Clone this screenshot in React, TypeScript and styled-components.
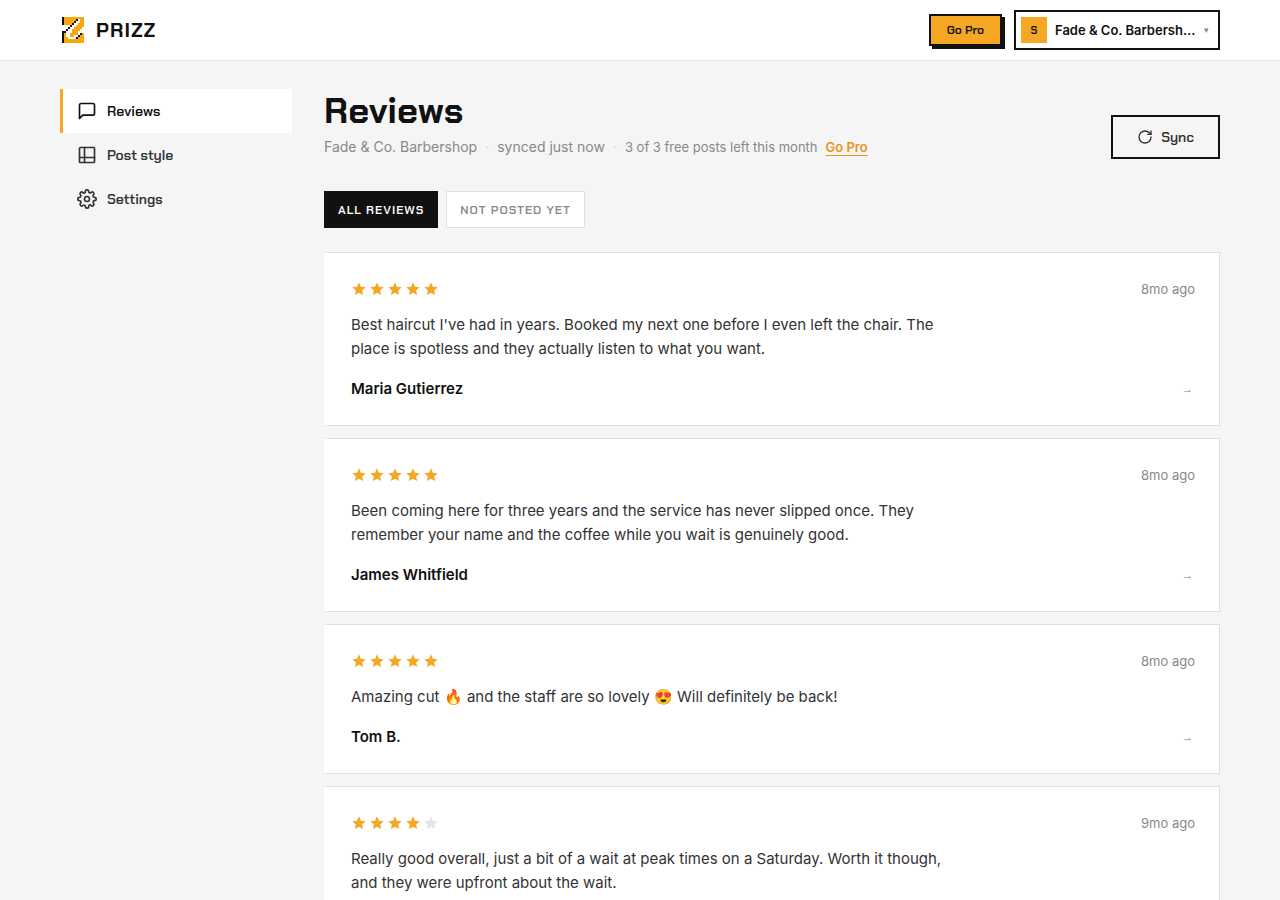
import React, { useState } from "react";
import styled, { createGlobalStyle } from "styled-components";

const INK = "#111111";
const AMBER = "#f5a623";
const DISPLAY = `"Chakra Petch", Inter, "Liberation Sans", sans-serif`;

const GlobalStyle = createGlobalStyle`
  *, *::before, *::after { box-sizing: border-box; }
  body {
    margin: 0;
    background: #f5f5f5;
    color: ${INK};
    font-family: Inter, "Liberation Sans", sans-serif;
    font-size: 15px;
    line-height: 24px;
  }
  button { font: inherit; color: inherit; cursor: pointer; }
`;

const TopBar = styled.header`
  background: #ffffff;
  border-bottom: 1px solid #e5e5e5;
`;

const TopBarInner = styled.div`
  display: flex;
  align-items: center;
  justify-content: space-between;
  max-width: 1240px;
  height: 60px;
  margin: 0 auto;
  padding: 0 40px;
`;

const Brand = styled.a`
  display: flex;
  align-items: center;
  gap: 12px;
  padding-left: 2px;
  color: ${INK};
  font-family: ${DISPLAY};
  font-size: 20px;
  font-weight: 700;
  letter-spacing: 1px;
  text-decoration: none;
`;

const TopActions = styled.div`
  display: flex;
  align-items: center;
  gap: 12px;
`;

const UpgradeButton = styled.button`
  height: 32px;
  padding: 0 16px;
  border: 2px solid ${INK};
  background: ${AMBER};
  box-shadow: 3px 3px 0 ${INK};
  && {
    font-family: ${DISPLAY};
    font-size: 12px;
    font-weight: 600;
    line-height: 16px;
  }
`;

const AccountButton = styled.button`
  display: flex;
  align-items: center;
  gap: 8px;
  width: 206px;
  height: 40px;
  padding: 0 9px 0 5px;
  border: 2px solid ${INK};
  background: #ffffff;
`;

const Avatar = styled.span`
  display: grid;
  place-items: center;
  flex: none;
  width: 26px;
  height: 26px;
  background: ${AMBER};
  font-family: ${DISPLAY};
  font-size: 11px;
  font-weight: 600;
`;

const AccountName = styled.span`
  flex: 1;
  min-width: 0;
  overflow: hidden;
  text-align: left;
  text-overflow: ellipsis;
  white-space: nowrap;
  font-size: 13px;
  font-weight: 600;
`;

const Caret = styled.span`
  color: #888888;
  font-size: 9px;
`;

const Shell = styled.div`
  display: grid;
  grid-template-columns: 232px minmax(0, 1fr);
  gap: 32px;
  max-width: 1240px;
  margin: 0 auto;
  padding: 28px 40px;
`;

const SideNav = styled.nav`
  display: flex;
  flex-direction: column;
`;

const NavLink = styled.a<{ $active?: boolean }>`
  display: flex;
  align-items: center;
  gap: 10px;
  height: 44px;
  padding: 0 14px;
  border-left: 3px solid ${(p) => (p.$active ? AMBER : "transparent")};
  background: ${(p) => (p.$active ? "#ffffff" : "transparent")};
  color: ${(p) => (p.$active ? INK : "#333333")};
  font-family: ${DISPLAY};
  font-size: 14px;
  font-weight: 600;
  text-decoration: none;
`;

const PageHead = styled.div`
  display: flex;
  align-items: flex-end;
  justify-content: space-between;
  margin-bottom: 32px;
`;

const Title = styled.h1`
  margin: 0 0 2px;
  font-family: ${DISPLAY};
  font-size: 36px;
  font-weight: 700;
  line-height: 44px;
`;

const Meta = styled.div`
  display: flex;
  align-items: center;
  gap: 8px;
  color: #888888;
  font-size: 14px;
`;

const Dot = styled.span`
  color: #d8d8d8;
`;

const Quota = styled.span`
  font-size: 13px;
`;

const UpgradeLink = styled.a`
  border-bottom: 1px solid #e8951a;
  color: #e8951a;
  font-size: 13px;
  font-weight: 600;
  line-height: 16px;
  text-decoration: none;
`;

const SyncButton = styled.button`
  display: flex;
  align-items: center;
  gap: 8px;
  height: 44px;
  padding: 0 24px;
  border: 2px solid ${INK};
  background: transparent;
  && {
    color: #333333;
    font-family: ${DISPLAY};
    font-size: 14px;
    font-weight: 600;
  }
`;

const Filters = styled.div`
  display: flex;
  gap: 8px;
  margin-bottom: 24px;
`;

const FilterButton = styled.button<{ $active: boolean }>`
  height: 37px;
  padding: 0 13px;
  border: 1px solid ${(p) => (p.$active ? INK : "#e0e0e0")};
  background: ${(p) => (p.$active ? INK : "#ffffff")};
  && {
    color: ${(p) => (p.$active ? "#ffffff" : "#888888")};
    font-family: ${DISPLAY};
    font-size: 12px;
    font-weight: 600;
    letter-spacing: 1px;
    text-transform: uppercase;
  }
`;

const ReviewList = styled.div`
  display: flex;
  flex-direction: column;
  gap: 12px;
`;

const Card = styled.article`
  padding: 24px;
  border: 1px solid #e0e0e0;
  border-left: 3px solid transparent;
  background: #ffffff;
`;

const CardRow = styled.div`
  display: flex;
  align-items: center;
  justify-content: space-between;
`;

const Stars = styled.div`
  display: flex;
  gap: 2px;
`;

const Age = styled.time`
  color: #888888;
  font-size: 13px;
`;

const Quote = styled.p`
  max-width: 600px;
  margin: 12px 0 16px;
  color: #333333;
`;

const Author = styled.span`
  font-weight: 600;
`;

const Arrow = styled.span`
  padding-right: 2px;
  color: #777777;
  font-family: "Liberation Sans", sans-serif;
  font-size: 11px;
`;

/* B = black, O = amber, W = white */
const LOGO_ROWS = [
  "BOOOOOOOOOO",
  "BOOOOOOBWOO",
  "BOOOOOBWWOO",
  "BOOOOBWWOOO",
  "WWWWBWWOOOO",
  "WWWBWWOOOOW",
  "WWBWWOOOOWW",
  "BBWWWOOOWWW",
  "BOWWOOOOWBO",
  "BOWWOOWWBOO",
  "BOOWWWWBOOO",
  "BOOOOOOOOOO",
  "BOOOOOOOOOO",
];
const LOGO_FILL: Record<string, string> = { B: "#111111", O: "#f9a60f", W: "#ffffff" };

function Logo() {
  return (
    <svg width="22" height="26" viewBox="0 0 11 13" shapeRendering="crispEdges" aria-hidden="true">
      {LOGO_ROWS.flatMap((row, y) =>
        [...row].map((c, x) => <rect key={`${x}-${y}`} x={x} y={y} width="1" height="1" fill={LOGO_FILL[c]} />)
      )}
    </svg>
  );
}

function Icon({ size = 20, children }: { size?: number; children: React.ReactNode }) {
  return (
    <svg width={size} height={size} viewBox="0 0 24 24" fill="none" stroke="currentColor" strokeWidth={2}
      strokeLinecap="round" strokeLinejoin="round" aria-hidden="true">
      {children}
    </svg>
  );
}

const GEAR =
  "M19.4 15a1.65 1.65 0 0 0 .33 1.82l.06.06a2 2 0 0 1-2.83 2.83l-.06-.06a1.65 1.65 0 0 0-1.82-.33 1.65 1.65 0 0 0-1 1.51V21a2 2 0 0 1-4 0v-.09A1.65 1.65 0 0 0 9 19.4a1.65 1.65 0 0 0-1.82.33l-.06.06a2 2 0 0 1-2.83-2.83l.06-.06a1.65 1.65 0 0 0 .33-1.82 1.65 1.65 0 0 0-1.51-1H3a2 2 0 0 1 0-4h.09A1.65 1.65 0 0 0 4.6 9a1.65 1.65 0 0 0-.33-1.82l-.06-.06a2 2 0 0 1 2.83-2.83l.06.06a1.65 1.65 0 0 0 1.82.33H9a1.65 1.65 0 0 0 1-1.51V3a2 2 0 0 1 4 0v.09a1.65 1.65 0 0 0 1 1.51 1.65 1.65 0 0 0 1.82-.33l.06-.06a2 2 0 0 1 2.83 2.83l-.06.06a1.65 1.65 0 0 0-.33 1.82V9a1.65 1.65 0 0 0 1.51 1H21a2 2 0 0 1 0 4h-.09a1.65 1.65 0 0 0-1.51 1z";

const NAV = [
  { label: "Reviews", icon: <path d="M21 15a2 2 0 0 1-2 2H7l-4 4V5a2 2 0 0 1 2-2h14a2 2 0 0 1 2 2z" /> },
  {
    label: "Post style",
    icon: (
      <>
        <rect x="3" y="3" width="18" height="18" rx="1" />
        <path d="M9 3v18M3 15h18" />
      </>
    ),
  },
  {
    label: "Settings",
    icon: (
      <>
        <circle cx="12" cy="12" r="3" />
        <path d={GEAR} />
      </>
    ),
  },
];

const FILTERS = ["All reviews", "Not posted yet"];

const REVIEWS = [
  {
    rating: 5,
    age: "8mo ago",
    text: "Best haircut I've had in years. Booked my next one before I even left the chair. The place is spotless and they actually listen to what you want.",
    author: "Maria Gutierrez",
  },
  {
    rating: 5,
    age: "8mo ago",
    text: "Been coming here for three years and the service has never slipped once. They remember your name and the coffee while you wait is genuinely good.",
    author: "James Whitfield",
  },
  {
    rating: 5,
    age: "8mo ago",
    text: "Amazing cut 🔥 and the staff are so lovely 😍 Will definitely be back!",
    author: "Tom B.",
  },
  {
    rating: 4,
    age: "9mo ago",
    text: "Really good overall, just a bit of a wait at peak times on a Saturday. Worth it though, and they were upfront about the wait.",
  },
];

function Rating({ value }: { value: number }) {
  return (
    <Stars role="img" aria-label={`${value} out of 5 stars`}>
      {[1, 2, 3, 4, 5].map((n) => (
        <svg key={n} width="16" height="16" viewBox="0 0 24 24" fill={n <= value ? AMBER : "#e5e5e5"}>
          <path d="M12 2l2.9 6.6 7.1.7-5.3 4.8 1.5 7-6.2-3.6-6.2 3.6 1.5-7L2 9.3l7.1-.7z" />
        </svg>
      ))}
    </Stars>
  );
}

export default function App() {
  const [filter, setFilter] = useState(FILTERS[0]);
  return (
    <>
      <GlobalStyle />
      <TopBar>
        <TopBarInner>
          <Brand href="#">
            <Logo />
            PRIZZ
          </Brand>
          <TopActions>
            <UpgradeButton>Go Pro</UpgradeButton>
            <AccountButton>
              <Avatar>S</Avatar>
              <AccountName>Fade &amp; Co. Barbershop</AccountName>
              <Caret>▾</Caret>
            </AccountButton>
          </TopActions>
        </TopBarInner>
      </TopBar>
      <Shell>
        <SideNav>
          {NAV.map((item, i) => (
            <NavLink key={item.label} href="#" $active={i === 0}>
              <Icon>{item.icon}</Icon>
              {item.label}
            </NavLink>
          ))}
        </SideNav>
        <main>
          <PageHead>
            <div>
              <Title>Reviews</Title>
              <Meta>
                <span>Fade &amp; Co. Barbershop</span>
                <Dot>·</Dot>
                <span>synced just now</span>
                <Dot>·</Dot>
                <Quota>3 of 3 free posts left this month</Quota>
                <UpgradeLink href="#">Go Pro</UpgradeLink>
              </Meta>
            </div>
            <SyncButton>
              <Icon size={16}>
                <path d="M21 12a9 9 0 1 1-9-9c2.52 0 4.93 1 6.74 2.74L21 8" />
                <path d="M21 3v5h-5" />
              </Icon>
              Sync
            </SyncButton>
          </PageHead>
          <Filters>
            {FILTERS.map((name) => (
              <FilterButton key={name} $active={name === filter} onClick={() => setFilter(name)}>
                {name}
              </FilterButton>
            ))}
          </Filters>
          <ReviewList>
            {REVIEWS.map((r) => (
              <Card key={r.text}>
                <CardRow>
                  <Rating value={r.rating} />
                  <Age>{r.age}</Age>
                </CardRow>
                <Quote>{r.text}</Quote>
                {r.author && (
                  <CardRow>
                    <Author>{r.author}</Author>
                    <Arrow>→</Arrow>
                  </CardRow>
                )}
              </Card>
            ))}
          </ReviewList>
        </main>
      </Shell>
    </>
  );
}
